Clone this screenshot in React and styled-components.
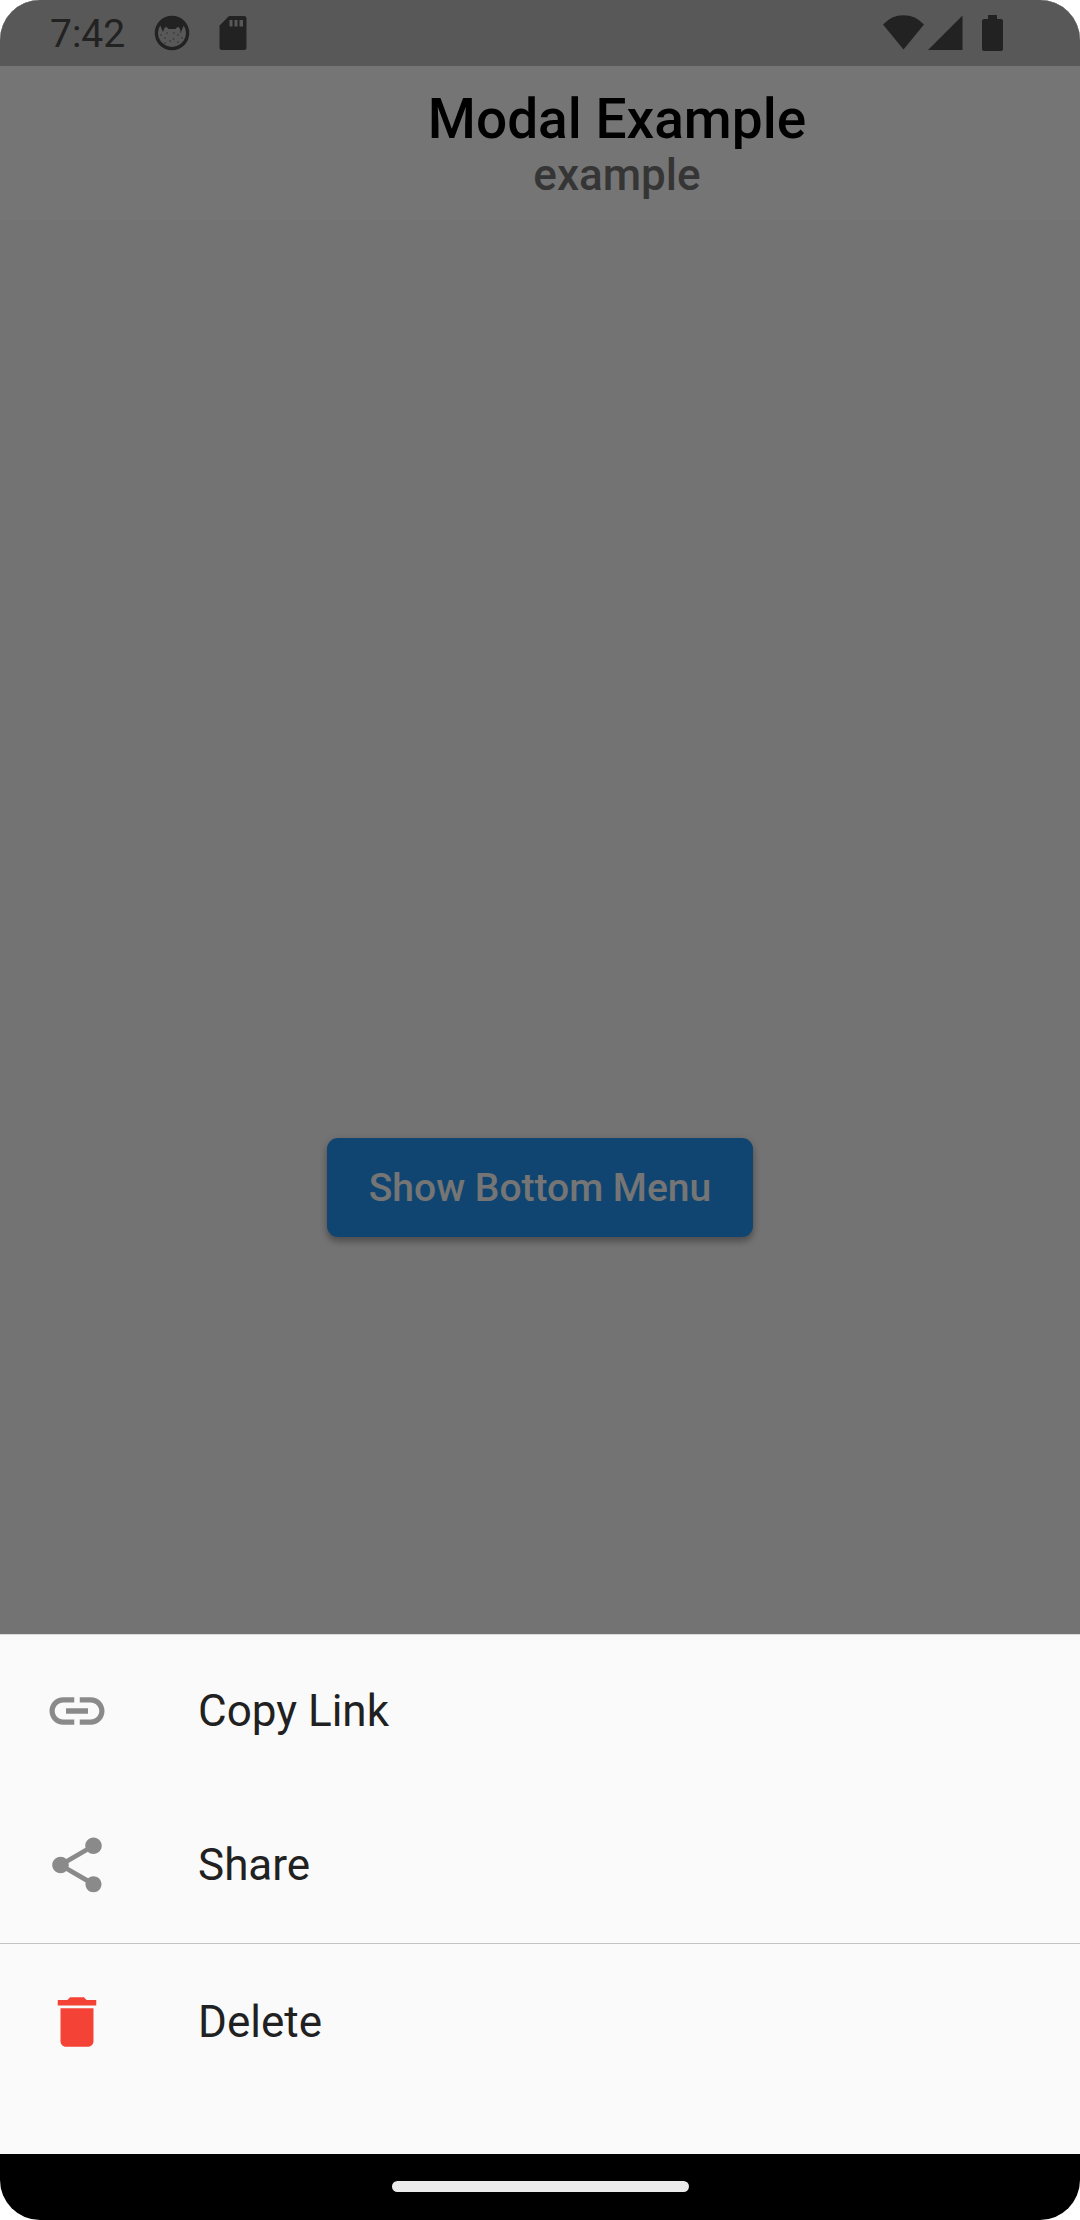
import React from "react";
import styled, { createGlobalStyle } from "styled-components";
import { MdLink, MdShare, MdDelete } from "react-icons/md";

const GlobalStyle = createGlobalStyle`
  *, *::before, *::after { box-sizing: border-box; }
  body { margin: 0; background: #fff; font-family: Roboto, "Liberation Sans", sans-serif; }
`;

const Screen = styled.div`
  display: flex;
  flex-direction: column;
  min-height: 100vh;
  border-radius: 40px;
  overflow: hidden;
  background: #000;
`;

const Stage = styled.div`
  position: relative;
  flex: 1;
  display: flex;
  flex-direction: column;
  background: #fafafa;
`;

const StatusBar = styled.div`
  display: flex;
  align-items: center;
  justify-content: space-between;
  height: 66px;
  padding: 0 77px 0 50px;
  background: #bfbfbf;
  color: #4a4a4a;
`;

const StatusGroup = styled.div`
  display: flex;
  align-items: center;
  gap: ${(p) => p.$gap}px;
`;

const Clock = styled.time`
  font-size: 39px;
  line-height: 44px;
  padding-top: 2px;
`;

const AppBar = styled.header`
  display: flex;
  flex-direction: column;
  align-items: center;
  justify-content: center;
  height: 154px;
  padding-left: 154px;
  background: #fff;
`;

const Title = styled.h1`
  margin: 0;
  font-size: 55px;
  line-height: 64px;
  font-weight: 500;
  color: #000;
`;

const Subtitle = styled.p`
  margin: 0;
  font-size: 44px;
  line-height: 48px;
  font-weight: 500;
  color: #757575;
`;

const Content = styled.main`
  flex: 1;
  display: flex;
  align-items: center;
  justify-content: center;
`;

const RaisedButton = styled.button`
  height: 99px;
  padding: 2px 42px 0;
  border: 0;
  border-radius: 11px;
  background: #2196f3;
  color: #fff;
  font-family: inherit;
  font-size: 39px;
  line-height: 44px;
  font-weight: 500;
  box-shadow: 0 5px 6px rgba(0, 0, 0, 0.22), 0 2px 8px rgba(0, 0, 0, 0.16);
`;

const Scrim = styled.div`
  position: absolute;
  inset: 0;
  background: rgba(0, 0, 0, 0.54);
`;

const Sheet = styled.div`
  position: absolute;
  left: 0;
  right: 0;
  bottom: 0;
  padding-bottom: 55px;
  box-shadow: inset 0 1px 0 #dadada;
  background: #fafafa;
`;

const SheetItem = styled.button`
  display: flex;
  align-items: center;
  gap: 88px;
  width: 100%;
  height: 154px;
  padding: 0 44px;
  border: 0;
  background: none;
  color: #212121;
  font-family: inherit;
  font-size: 44px;
  line-height: 52px;
  text-align: left;

  svg { width: 66px; height: 66px; color: ${(p) => (p.$danger ? "#f44336" : "#8a8a8a")}; }
`;

const Divider = styled.hr`
  height: 3px;
  margin: 0;
  border: 0;
  background: linear-gradient(#fafafa 1px, #c2c2c2 1px, #c2c2c2 2px, #fafafa 2px);
`;

const NavBar = styled.div`
  display: flex;
  align-items: center;
  justify-content: center;
  height: 66px;
  padding-bottom: 2px;
`;

const HomeHandle = styled.div`
  width: 297px;
  height: 11px;
  border-radius: 6px;
  background: #ebebeb;
`;

const FaceIcon = () => (
  <svg width="36" height="36" viewBox="0 0 36 36" fill="currentColor" aria-hidden="true">
    <circle cx="18" cy="18" r="15.6" fill="none" stroke="currentColor" strokeWidth="3.4" />
    <path d="M8 6Q18-1 28 6L30 10L27 17L25.500 13Q24 10.500 21.500 14H14.500Q12 10.500 10.500 13L9 17L6 10Z" />
    <g fillOpacity="0.75">
      {[[7, 20], [11, 23], [13, 18], [16, 26], [19.5, 24], [20, 18], [24, 20], [26.500, 17], [28, 23], [24, 27], [11, 28]].map(([x, y]) => (
        <circle key={`${x}-${y}`} cx={x} cy={y} r="0.8" />
      ))}
    </g>
  </svg>
);

const SdCardIcon = () => (
  <svg width="28" height="36" viewBox="0 0 28 36" fill="currentColor" aria-hidden="true">
    <path fillRule="evenodd" d="M10 1H25Q27.500 1 27.500 3.500V32.500Q27.500 35 25 35H3Q.5 35 .5 32.500V10.500ZM10.500 5V11.500H13.500V5ZM15.500 5V11.500H18.500V5ZM20.500 5V11.500H24V5Z" />
  </svg>
);

const WifiIcon = () => (
  <svg width="42" height="36" viewBox="0 0 42 36" fill="currentColor" aria-hidden="true">
    <path d="M1 9.500Q9.500 .3 21.500 .3T42 9.500L21.500 34.500Z" />
  </svg>
);

const SignalIcon = () => (
  <svg width="35" height="36" viewBox="0 0 35 36" fill="currentColor" aria-hidden="true">
    <path d="M0 35L34.500 .5V35Z" />
  </svg>
);

const BatteryIcon = () => (
  <svg width="21" height="36" viewBox="0 0 21 36" fill="currentColor" aria-hidden="true">
    <path d="M6 0H15V4H19Q21 4 21 6V34Q21 36 19 36H2Q0 36 0 34V6Q0 4 2 4H6Z" />
  </svg>
);

const BatterySlot = styled.span`
  display: flex;
  margin-left: 15px;
`;

export default function App() {
  return (
    <>
      <GlobalStyle />
      <Screen>
        <Stage>
          <StatusBar>
            <StatusGroup $gap={29}>
              <Clock>7:42</Clock>
              <FaceIcon />
              <SdCardIcon />
            </StatusGroup>
            <StatusGroup $gap={4}>
              <WifiIcon />
              <SignalIcon />
              <BatterySlot>
                <BatteryIcon />
              </BatterySlot>
            </StatusGroup>
          </StatusBar>
          <AppBar>
            <Title>Modal Example</Title>
            <Subtitle>example</Subtitle>
          </AppBar>
          <Content>
            <RaisedButton type="button">Show Bottom Menu</RaisedButton>
          </Content>
          <Scrim />
          <Sheet role="dialog" aria-label="Bottom Menu">
            <SheetItem type="button">
              <MdLink aria-hidden="true" />
              Copy Link
            </SheetItem>
            <SheetItem type="button">
              <MdShare aria-hidden="true" />
              Share
            </SheetItem>
            <Divider />
            <SheetItem type="button" $danger>
              <MdDelete aria-hidden="true" />
              Delete
            </SheetItem>
          </Sheet>
        </Stage>
        <NavBar>
          <HomeHandle />
        </NavBar>
      </Screen>
    </>
  );
}
